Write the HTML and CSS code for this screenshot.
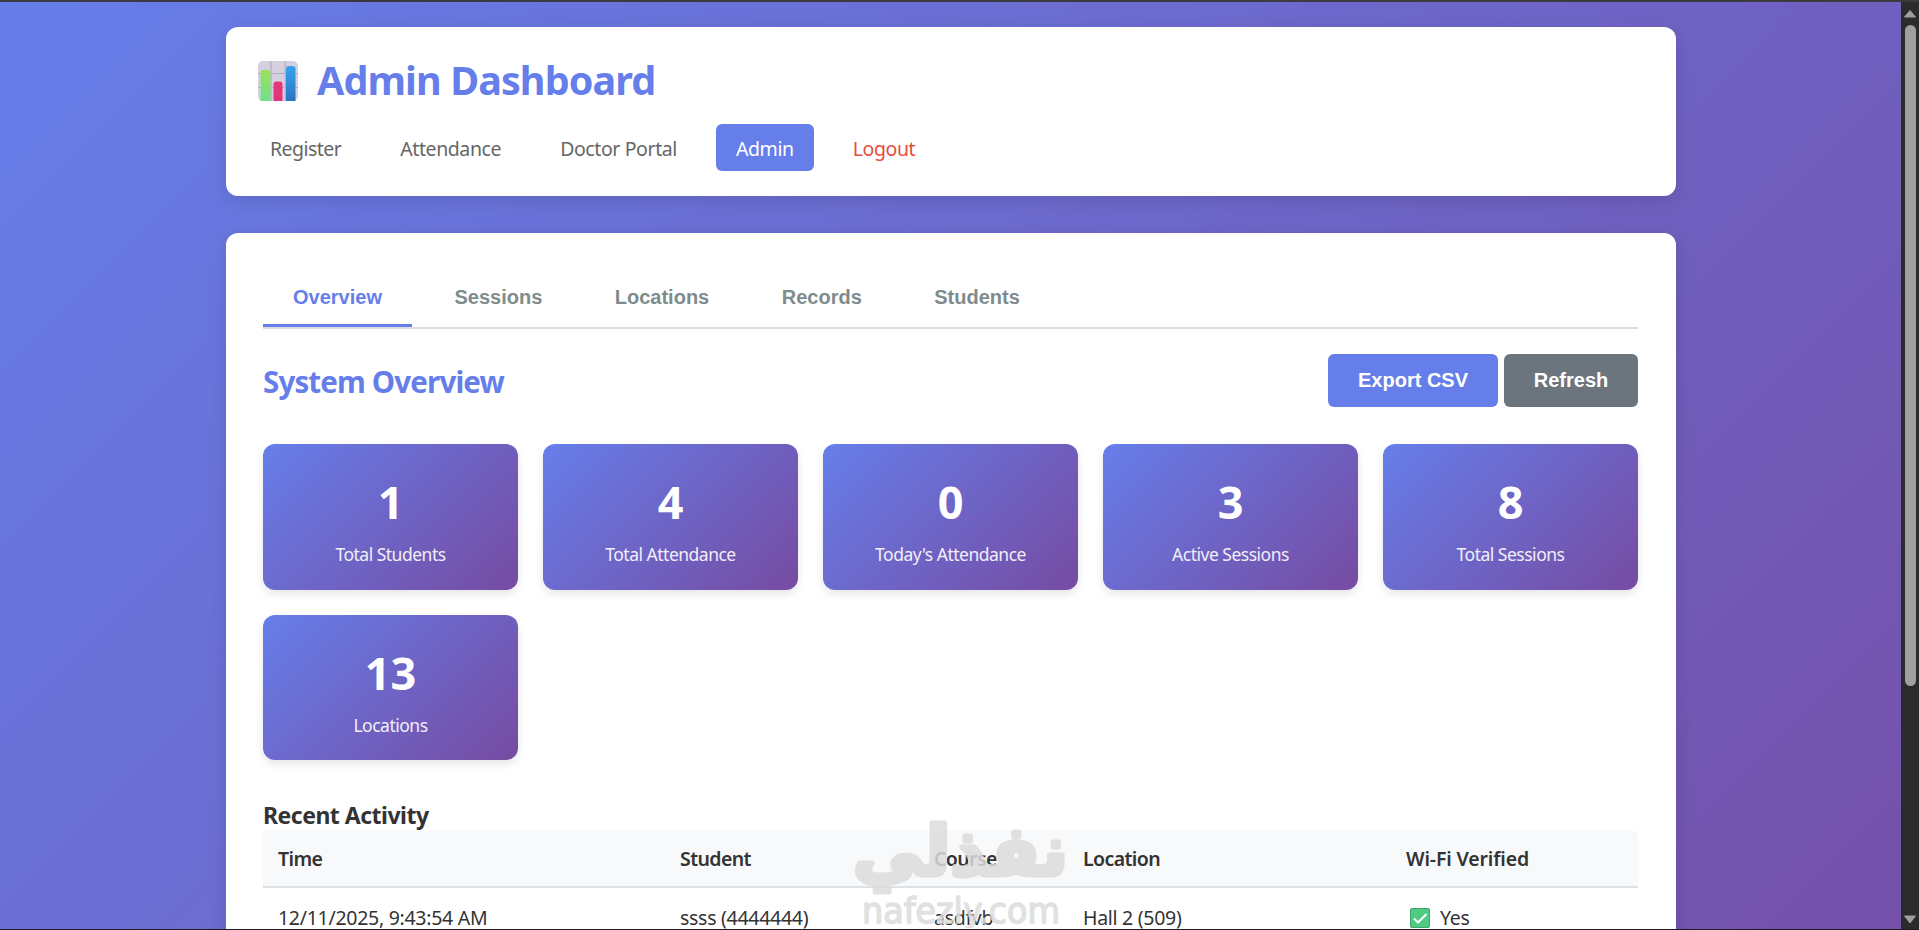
FILE: index.html
```html
<!DOCTYPE html>
<html lang="en">
<head>
<meta charset="utf-8">
<title>Admin Dashboard</title>
<link rel="stylesheet" href="styles.css">
</head>
<body>
<div class="window">
  <main class="page">
    <header class="card header">
      <h1 class="title">
        <svg class="title-icon" viewBox="0 0 40 40" aria-hidden="true">
          <defs>
            <linearGradient id="gGreen" x1="0" y1="0" x2="0" y2="1"><stop offset="0" stop-color="#9be05a"/><stop offset="1" stop-color="#6fe08c"/></linearGradient>
            <linearGradient id="gBlue" x1="0" y1="0" x2="0" y2="1"><stop offset="0" stop-color="#35a3ee"/><stop offset="1" stop-color="#2a74c4"/></linearGradient>
          </defs>
          <rect width="40" height="40" rx="5" fill="#d6cfe0"/>
          <path d="M13 0v40M27.300 0v40M0 12.500h40M0 26.500h40" stroke="#b4adbf" stroke-width="1.200"/>
          <path d="M2.500 40V12a3 3 0 0 1 3-3h4a3 3 0 0 1 3 3v28z" fill="url(#gGreen)"/>
          <path d="M15.500 40V23.500a3 3 0 0 1 3-3h3a3 3 0 0 1 3 3V40z" fill="#e2357a"/>
          <path d="M28 40V8a3 3 0 0 1 3-3h3.500a3 3 0 0 1 3 3v32z" fill="url(#gBlue)"/>
        </svg>
        <span class="title-text">Admin Dashboard</span>
      </h1>
      <nav class="nav">
        <a class="nav-link nav-first">Register</a>
        <a class="nav-link">Attendance</a>
        <a class="nav-link">Doctor Portal</a>
        <a class="nav-link nav-active">Admin</a>
        <a class="nav-link nav-logout">Logout</a>
      </nav>
    </header>
    <section class="card content">
      <div class="tabs">
        <button class="tab tab-active">Overview</button>
        <button class="tab">Sessions</button>
        <button class="tab">Locations</button>
        <button class="tab">Records</button>
        <button class="tab">Students</button>
      </div>
      <div class="section-head">
        <h2 class="section-title">System Overview</h2>
        <div class="actions">
          <button class="btn btn-primary">Export CSV</button>
          <button class="btn btn-secondary">Refresh</button>
        </div>
      </div>
      <div class="stats">
        <div class="stat"><div class="stat-value">1</div><div class="stat-label">Total Students</div></div>
        <div class="stat"><div class="stat-value">4</div><div class="stat-label">Total Attendance</div></div>
        <div class="stat"><div class="stat-value">0</div><div class="stat-label">Today's Attendance</div></div>
        <div class="stat"><div class="stat-value">3</div><div class="stat-label">Active Sessions</div></div>
        <div class="stat"><div class="stat-value">8</div><div class="stat-label">Total Sessions</div></div>
        <div class="stat"><div class="stat-value">13</div><div class="stat-label">Locations</div></div>
      </div>
      <h3 class="recent">Recent Activity</h3>
      <div class="table">
        <div class="row row-head"><span>Time</span><span>Student</span><span>Course</span><span>Location</span><span class="wifi">Wi-Fi Verified</span></div>
        <div class="row"><span>12/11/2025, 9:43:54 AM</span><span>ssss (4444444)</span><span>asdfvb</span><span>Hall 2 (509)</span>
          <span class="verified"><svg class="check" viewBox="0 0 20 20" aria-hidden="true"><rect x=".5" y=".5" width="19" height="19" rx="1.500" fill="#4fcb83" stroke="#3fa76d"/><path d="M4 10.500l4 4 8.500-8.500" fill="none" stroke="#fff" stroke-width="2"/></svg>Yes</span></div>
      </div>
    </section>
    <svg class="watermark" viewBox="0 0 230 120" aria-hidden="true">
      <text class="wm-ar" x="222" y="67" direction="rtl" textLength="215" lengthAdjust="spacingAndGlyphs">نفذلي</text>
      <text class="wm-en" x="16" y="115" textLength="198" lengthAdjust="spacingAndGlyphs">nafezly.com</text>
    </svg>
  </main>
  <aside class="scrollbar">
    <svg class="arrow" viewBox="0 0 14 9"><path d="M7 1.500L12.500 8h-11z" fill="#9f9f9f" stroke="#9f9f9f" stroke-linejoin="round"/></svg>
    <div class="thumb"></div>
    <svg class="arrow arrow-down" viewBox="0 0 14 9"><path d="M7 8L12.500 1h-11z" fill="#9f9f9f" stroke="#9f9f9f" stroke-linejoin="round"/></svg>
  </aside>
</div>
</body>
</html>
```
FILE: styles.css
```css
* { box-sizing: border-box; margin: 0; }
body { font-family: "Noto Sans", "Open Sans", sans-serif; font-size: 19.500px; color: #333; }
button { border: 0; font: bold 20px "Liberation Sans", sans-serif; }

.window {
  display: grid;
  grid-template-columns: 1901px 18px;
  width: 1919px;
  height: 930px;
  overflow: hidden;
  border-top: 2px solid #3a3a3f;
  border-bottom: 1px solid #1e1e24;
}
.page {
  position: relative;
  height: 927px;
  overflow: hidden;
  padding: 25px 225px 0 226px;
  background: linear-gradient(135deg, #667eea 0%, #764ba2 100%) 0 0 / 1901px 1270px;
}
.card { background: #fff; border-radius: 12px; box-shadow: 0 5px 19px rgba(0, 0, 0, .12); }

.header { height: 169px; padding: 25px 25px 0; }
.title { display: flex; align-items: center; gap: 19px; height: 54px; padding-left: 7px; font-size: 39.500px; line-height: 54px; letter-spacing: -.9px; color: #667eea; }
.title-icon { width: 40px; height: 40px; margin-top: 4px; }
.title-text { padding-top: 2px; }
.nav { display: flex; gap: 19px; margin: 18px 0 0 -1px; }
.nav-link { height: 47px; padding: 1px 20px 0; border-radius: 6px; line-height: 47px; letter-spacing: -.4px; color: #666; white-space: nowrap; }
.nav-first { letter-spacing: -.55px; }
.nav-active { background: #667eea; color: #fff; }
.nav-logout { color: #e74c3c; }

.content { margin-top: 37px; height: 1000px; padding: 31px 38px 0 37px; }
.tabs { display: flex; gap: 12.500px; height: 65px; border-bottom: 2px solid #ddd; }
.tab { height: 63px; padding: 7px 30px 0; background: none; border-bottom: 3px solid transparent; color: #7f8c8d; }
.tab-active { color: #667eea; border-bottom-color: #667eea; }
.section-head { display: flex; justify-content: space-between; align-items: center; height: 53px; margin-top: 25px; }
.section-title { padding-top: 2px; font-size: 29.500px; letter-spacing: -.85px; color: #667eea; white-space: nowrap; }
.actions { display: flex; gap: 6px; }
.btn { height: 53px; border-radius: 6px; color: #fff; }
.btn-primary { width: 170px; background: #667eea; }
.btn-secondary { width: 134px; background: #6c757d; }

.stats { display: grid; grid-template-columns: repeat(5, 255px); gap: 25px; margin-top: 37px; }
.stat {
  height: 145.500px;
  padding-top: 26px;
  border-radius: 12px;
  background: linear-gradient(135deg, #667eea 0%, #764ba2 100%);
  box-shadow: 0 4px 8px rgba(0, 0, 0, .1);
  color: #fff;
  text-align: center;
}
.stat-value { font-size: 45px; font-weight: 700; line-height: 63px; }
.stat-label { margin-top: 7px; font-size: 17.500px; line-height: 28px; letter-spacing: -.5px; opacity: .9; }

.recent { margin-top: 38.500px; font-size: 23px; line-height: 33px; letter-spacing: -.5px; }
.table { margin-top: -1.500px; }
.row { display: grid; grid-template-columns: 402px 254px 149px 323px 1fr; padding: 16px 0 14px 15px; line-height: 28px; letter-spacing: -.28px; white-space: nowrap; }
.row-head { padding-top: 15px; padding-bottom: 13px; background: #f8f9fa; border-bottom: 2px solid #dee2e6; font-weight: 600; letter-spacing: -.6px; border-radius: 6px 6px 0 0; }
.row-head .wifi { letter-spacing: -.15px; }
.verified { display: flex; align-items: center; gap: 10px; padding-left: 4px; }
.check { width: 20px; height: 20px; }

.watermark { position: absolute; left: 846px; top: 806px; width: 230px; height: 120px; fill: #dcdcdc; stroke: #dcdcdc; stroke-linejoin: round; opacity: .85; }
.wm-ar { font: bold 68px "DejaVu Sans", sans-serif; stroke-width: 5px; }
.wm-en { font: 36px "DejaVu Sans", sans-serif; stroke-width: 1.500px; }

.scrollbar { display: flex; flex-direction: column; align-items: center; padding-top: 7px; background: #2b2b2b; }
.arrow { width: 14px; height: 9px; flex: none; }
.thumb { width: 11px; height: 661px; margin-top: 7px; border-radius: 6px; background: #9f9f9f; }
.arrow-down { margin-top: 229px; }
```
